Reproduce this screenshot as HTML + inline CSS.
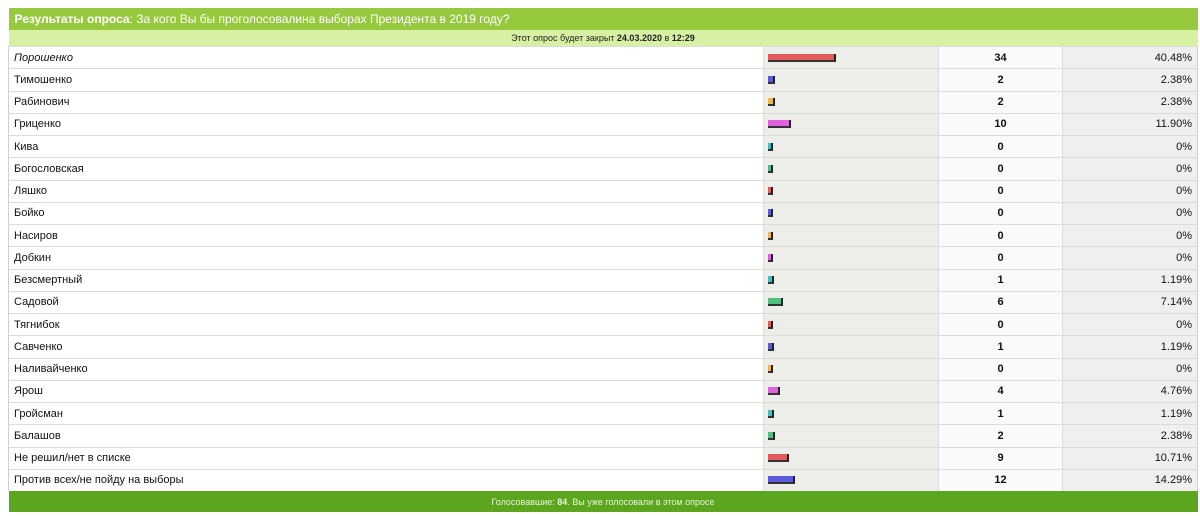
<!DOCTYPE html>
<html><head><meta charset="utf-8"><style>
body{margin:0;background:#fff;font-family:"Liberation Sans","DejaVu Sans",sans-serif;}
.t{position:absolute;left:8px;top:8px;width:1189px;border-collapse:collapse;table-layout:fixed;}
.t td{padding:0;overflow:hidden;white-space:nowrap;}
.h{background:#97c93f;height:22px;color:#fff;font-size:12px;padding-left:6px!important;}
.s{background:#d8f0a4;height:16px;font-size:9px;text-align:center;color:#222;}
.r td{height:21.25px;border-top:1px solid #dcdcdc;font-size:11px;color:#111;}
.n{background:#fff;padding-left:5px!important;border-left:1px solid #cfcfcf;}
.b{background:#ededea;border-left:1px solid #ddd;}
.c{background:#fafafa;text-align:center;font-weight:bold;border-left:1px solid #ddd;}
.p{background:#efefef;text-align:right;padding-right:5px!important;border-left:1px solid #ddd;border-right:1px solid #cfcfcf;}
.bar{display:inline-block;height:6px;margin-left:4px;vertical-align:middle;border-right:2px solid #222;border-bottom:2px solid #333;}
.f{background:#5ca51f;height:21px;color:#e8f5d8;font-size:9px;text-align:center;}
</style></head><body>
<table class="t">
<colgroup><col style="width:755px"><col style="width:175px"><col style="width:124px"><col style="width:135px"></colgroup>
<tr><td colspan="4" class="h"><b>Результаты опроса</b>: За кого Вы бы проголосовалина выборах Президента в 2019 году?</td></tr>
<tr><td colspan="4" class="s">Этот опрос будет закрыт <b>24.03.2020</b> в <b>12:29</b></td></tr>
<tr class="r"><td class="n"><i>Порошенко</i></td><td class="b"><span class="bar" style="width:66px;background:#e35a5a"></span></td><td class="c">34</td><td class="p">40.48%</td></tr>
<tr class="r"><td class="n">Тимошенко</td><td class="b"><span class="bar" style="width:5px;background:#5b5be0"></span></td><td class="c">2</td><td class="p">2.38%</td></tr>
<tr class="r"><td class="n">Рабинович</td><td class="b"><span class="bar" style="width:5px;background:#f0b64a"></span></td><td class="c">2</td><td class="p">2.38%</td></tr>
<tr class="r"><td class="n">Гриценко</td><td class="b"><span class="bar" style="width:21px;background:#e060e0"></span></td><td class="c">10</td><td class="p">11.90%</td></tr>
<tr class="r"><td class="n">Кива</td><td class="b"><span class="bar" style="width:3px;background:#40c0c0"></span></td><td class="c">0</td><td class="p">0%</td></tr>
<tr class="r"><td class="n">Богословская</td><td class="b"><span class="bar" style="width:3px;background:#50c080"></span></td><td class="c">0</td><td class="p">0%</td></tr>
<tr class="r"><td class="n">Ляшко</td><td class="b"><span class="bar" style="width:3px;background:#e35a5a"></span></td><td class="c">0</td><td class="p">0%</td></tr>
<tr class="r"><td class="n">Бойко</td><td class="b"><span class="bar" style="width:3px;background:#5b5be0"></span></td><td class="c">0</td><td class="p">0%</td></tr>
<tr class="r"><td class="n">Насиров</td><td class="b"><span class="bar" style="width:3px;background:#f0b64a"></span></td><td class="c">0</td><td class="p">0%</td></tr>
<tr class="r"><td class="n">Добкин</td><td class="b"><span class="bar" style="width:3px;background:#e060e0"></span></td><td class="c">0</td><td class="p">0%</td></tr>
<tr class="r"><td class="n">Безсмертный</td><td class="b"><span class="bar" style="width:4px;background:#40c0c0"></span></td><td class="c">1</td><td class="p">1.19%</td></tr>
<tr class="r"><td class="n">Садовой</td><td class="b"><span class="bar" style="width:13px;background:#50c080"></span></td><td class="c">6</td><td class="p">7.14%</td></tr>
<tr class="r"><td class="n">Тягнибок</td><td class="b"><span class="bar" style="width:3px;background:#e35a5a"></span></td><td class="c">0</td><td class="p">0%</td></tr>
<tr class="r"><td class="n">Савченко</td><td class="b"><span class="bar" style="width:4px;background:#5b5be0"></span></td><td class="c">1</td><td class="p">1.19%</td></tr>
<tr class="r"><td class="n">Наливайченко</td><td class="b"><span class="bar" style="width:3px;background:#f0b64a"></span></td><td class="c">0</td><td class="p">0%</td></tr>
<tr class="r"><td class="n">Ярош</td><td class="b"><span class="bar" style="width:10px;background:#e060e0"></span></td><td class="c">4</td><td class="p">4.76%</td></tr>
<tr class="r"><td class="n">Гройсман</td><td class="b"><span class="bar" style="width:4px;background:#40c0c0"></span></td><td class="c">1</td><td class="p">1.19%</td></tr>
<tr class="r"><td class="n">Балашов</td><td class="b"><span class="bar" style="width:5px;background:#50c080"></span></td><td class="c">2</td><td class="p">2.38%</td></tr>
<tr class="r"><td class="n">Не решил/нет в списке</td><td class="b"><span class="bar" style="width:19px;background:#e35a5a"></span></td><td class="c">9</td><td class="p">10.71%</td></tr>
<tr class="r"><td class="n">Против всех/не пойду на выборы</td><td class="b"><span class="bar" style="width:25px;background:#5b5be0"></span></td><td class="c">12</td><td class="p">14.29%</td></tr>
<tr><td colspan="4" class="f">Голосовавшие: <b>84</b>. Вы уже голосовали в этом опросе</td></tr>
</table>
</body></html>
